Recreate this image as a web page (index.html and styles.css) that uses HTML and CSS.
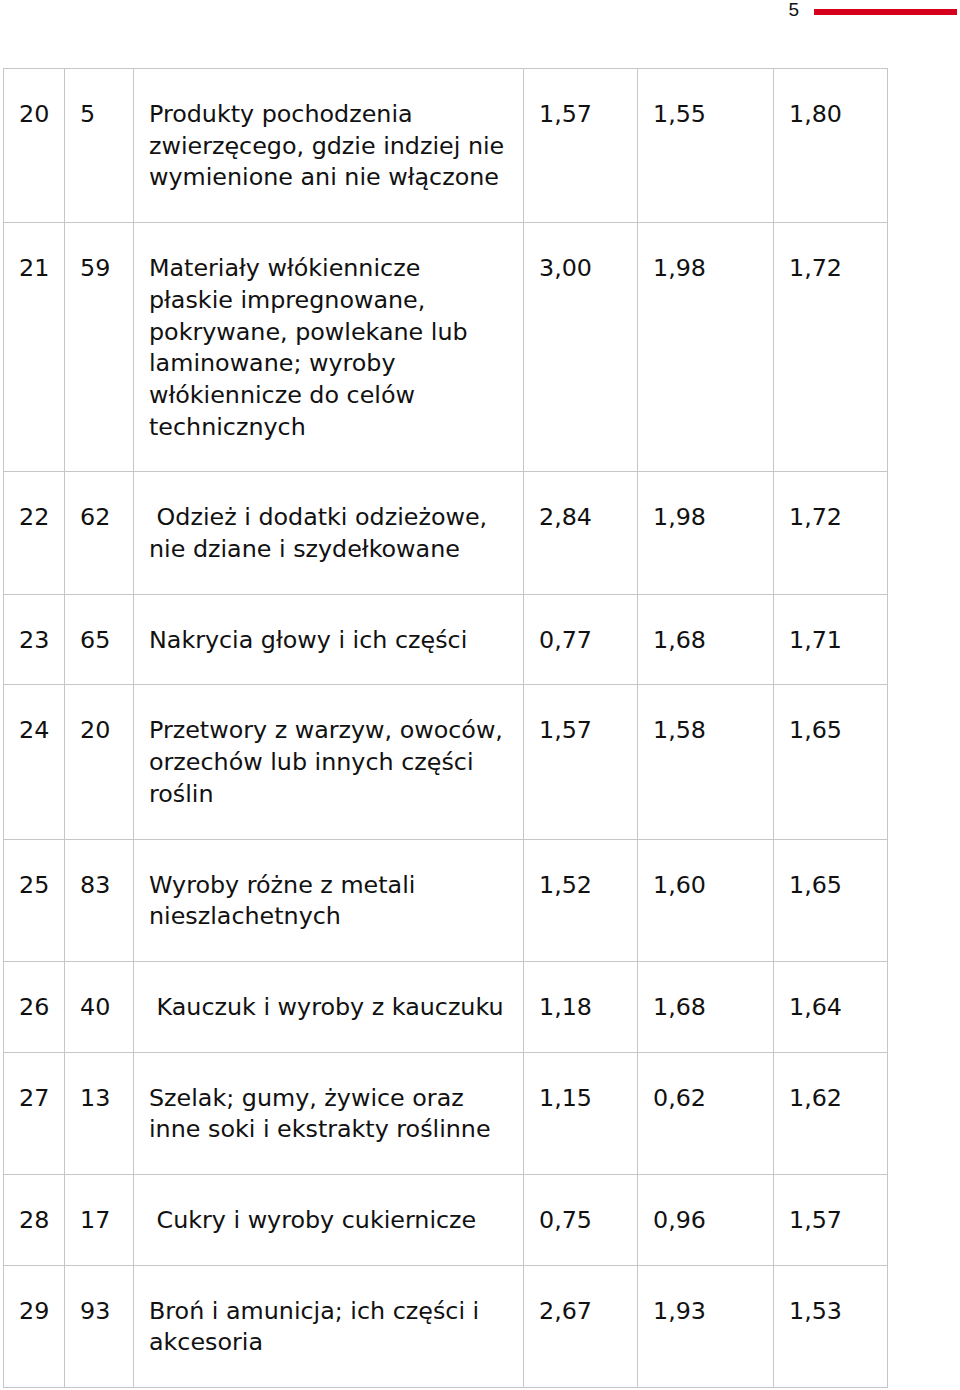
FILE: index.html
```html
<!DOCTYPE html>
<html lang="pl">
<head>
<meta charset="utf-8">
<title>Tabela</title>
<link rel="stylesheet" href="styles.css">
</head>
<body>
<header class="page-head">
  <span class="page-num">5</span>
  <span class="page-bar"></span>
</header>
<table class="data">
  <colgroup>
    <col class="c-lp"><col class="c-code"><col class="c-name"><col class="c-v1"><col class="c-v2"><col class="c-v3">
  </colgroup>
  <tbody>
    <tr><td>20</td><td>5</td><td>Produkty pochodzenia zwierzęcego, gdzie indziej nie wymienione ani nie włączone</td><td>1,57</td><td>1,55</td><td>1,80</td></tr>
    <tr><td>21</td><td>59</td><td>Materiały włókiennicze płaskie impregnowane, pokrywane, powlekane lub laminowane; wyroby włókiennicze do celów technicznych</td><td>3,00</td><td>1,98</td><td>1,72</td></tr>
    <tr><td>22</td><td>62</td><td>&nbsp;Odzież i dodatki odzieżowe, nie dziane i szydełkowane</td><td>2,84</td><td>1,98</td><td>1,72</td></tr>
    <tr><td>23</td><td>65</td><td>Nakrycia głowy i ich części</td><td>0,77</td><td>1,68</td><td>1,71</td></tr>
    <tr><td>24</td><td>20</td><td>Przetwory z warzyw, owoców, orzechów lub innych części roślin</td><td>1,57</td><td>1,58</td><td>1,65</td></tr>
    <tr><td>25</td><td>83</td><td>Wyroby różne z metali nieszlachetnych</td><td>1,52</td><td>1,60</td><td>1,65</td></tr>
    <tr><td>26</td><td>40</td><td>&nbsp;Kauczuk i wyroby z kauczuku</td><td>1,18</td><td>1,68</td><td>1,64</td></tr>
    <tr><td>27</td><td>13</td><td>Szelak; gumy, żywice oraz inne soki i ekstrakty roślinne</td><td>1,15</td><td>0,62</td><td>1,62</td></tr>
    <tr><td>28</td><td>17</td><td>&nbsp;Cukry i wyroby cukiernicze</td><td>0,75</td><td>0,96</td><td>1,57</td></tr>
    <tr><td>29</td><td>93</td><td>Broń i amunicja; ich części i akcesoria</td><td>2,67</td><td>1,93</td><td>1,53</td></tr>
  </tbody>
</table>
</body>
</html>
```
FILE: styles.css
```css
html, body {
  margin: 0;
  padding: 0;
  background: #ffffff;
}

.page-head {
  display: flex;
  justify-content: flex-end;
  align-items: flex-start;
  gap: 15px;
  height: 20px;
  padding-right: 3px;
}

.page-num {
  font-family: "Liberation Sans", Arial, sans-serif;
  font-size: 19px;
  line-height: 19px;
  color: #111;
}

.page-bar {
  display: block;
  width: 143px;
  height: 6px;
  margin-top: 9px;
  background: #d7001c;
}

.data {
  margin: 48px 0 0 3px;
  border-collapse: collapse;
  table-layout: fixed;
  width: 884px;
  font-family: "DejaVu Sans", sans-serif;
  font-size: 23.8px;
  line-height: 31.7px;
  color: #111;
}

.c-lp { width: 61px; }
.c-code { width: 69px; }
.c-name { width: 390px; }
.c-v1 { width: 114px; }
.c-v2 { width: 136px; }
.c-v3 { width: 114px; }

.data td {
  border: 1px solid #c6c6c6;
  vertical-align: top;
  padding: 30px 12px 28px 15px;
}
```
